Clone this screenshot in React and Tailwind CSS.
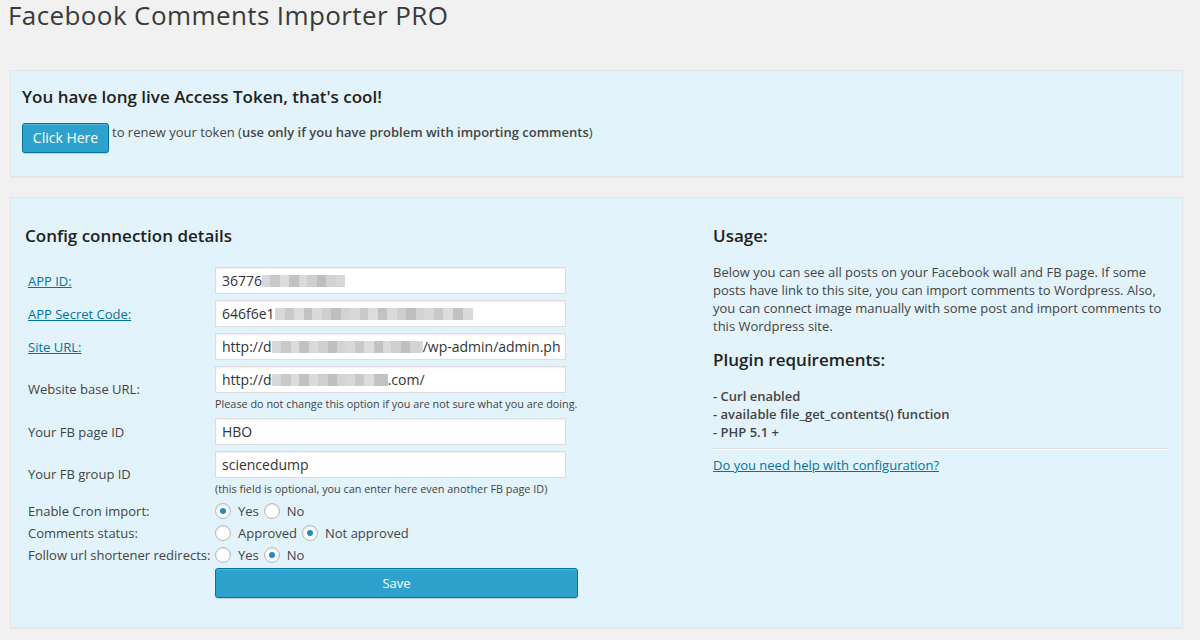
import React from 'react';

// pixelated redaction blocks, like the blurred parts of the screenshot
const Redact = ({ widths, shades }) => (
    <span className="inline-flex items-center align-middle h-[12px] -mt-[2px]">
        {widths.map((w, i) => (
            <span
                key={i}
                className="inline-block h-[12px]"
                style={{ width: w, backgroundColor: shades[i % shades.length] }}
            />
        ))}
    </span>
);

const greys = ['#d6d8d9', '#c9c9c9', '#dcdcdc', '#c2c2c2', '#d9dadb', '#cfcfcf', '#bdbfc0', '#d3d3d3'];

const Field = ({ children }) => (
    <div className="h-[27px] w-[351px] border border-[#ddd] bg-white shadow-[inset_0_1px_2px_rgba(0,0,0,0.07)] px-[6px] text-[14px] leading-[25px] text-[#333] overflow-hidden whitespace-nowrap">
        {children}
    </div>
);

const Radio = ({ checked }) => (
    <span className="w-[16px] h-[16px] rounded-full border border-[#b4b9be] bg-white shadow-[inset_0_1px_2px_rgba(0,0,0,0.1)] flex items-center justify-center shrink-0">
        {checked && <span className="w-[6px] h-[6px] rounded-full bg-[#1e8cbe]" />}
    </span>
);

const Row = ({ label, link, children }) => (
    <div className="flex items-center py-[3px]">
        <div className="w-[190px] pl-[3px] shrink-0">
            {link ? <a href="#" className="text-[#0074a2] underline">{label}</a> : label}
        </div>
        <div>{children}</div>
    </div>
);

const Help = ({ children }) => (
    <div className="mt-[3px] text-[10.85px] leading-[16px] text-[#444]">{children}</div>
);

const RadioRow = ({ label, options }) => (
    <div className="flex items-center h-[22px]">
        <div className="w-[190px] pl-[3px] shrink-0 whitespace-nowrap">{label}</div>
        <div className="flex items-center">
            {options.map((o, i) => (
                <React.Fragment key={o.text}>
                    <span className={i > 0 ? 'ml-[5px]' : ''}><Radio checked={o.checked} /></span>
                    <span className="ml-[7px]">{o.text}</span>
                </React.Fragment>
            ))}
        </div>
    </div>
);

const App = () => {
    return (
        <div className="min-h-[640px] w-[1200px] bg-[#f1f1f1] font-['Open_Sans',sans-serif] text-[13px] leading-[18px] text-[#444]">
            <h1 className="pl-[8px] text-[26px] leading-[30px] tracking-[0.4px] font-normal text-[#3a3a3a]">
                Facebook Comments Importer PRO
            </h1>

            {/* ── Token notice ── */}
            <div className="mt-[40px] ml-[10px] w-[1173px] border border-[#e5e5e5] bg-[#e2f3fb] shadow-[0_1px_1px_rgba(0,0,0,0.04)] pt-[15px] pb-[23px] px-[11px]">
                <h3 className="text-[17px] leading-[22px] font-semibold text-[#222]">
                    You have long live Access Token, that's cool!
                </h3>
                <div className="mt-[15px] flex items-start">
                    <button className="h-[30px] w-[87px] rounded-[3px] border border-[#0074a2] bg-[#2ea2cc] text-white text-[14px] shadow-[inset_0_1px_0_rgba(120,200,230,0.5),0_1px_0_rgba(0,0,0,0.15)]">
                        Click Here
                    </button>
                    <span className="ml-[3px]">
                        to renew your token (<b className="font-semibold">use only if you have problem with importing comments</b>)
                    </span>
                </div>
            </div>

            {/* ── Config + usage ── */}
            <div className="mt-[20px] ml-[10px] w-[1173px] border border-[#e5e5e5] bg-[#e2f3fb] shadow-[0_1px_1px_rgba(0,0,0,0.04)] pt-[27px] pb-[29px] flex">
                <div className="w-[702px] pl-[14px] shrink-0">
                    <h3 className="text-[17px] leading-[22px] font-semibold text-[#222]">Config connection details</h3>
                    <div className="mt-[17px]">
                        <Row label="APP ID:" link>
                            <Field>36776<Redact widths={[8, 10, 9, 10, 8, 10, 9, 10, 9]} shades={greys} /></Field>
                        </Row>
                        <Row label="APP Secret Code:" link>
                            <Field>646f6e1<Redact widths={[10, 9, 10, 8, 10, 9, 10, 9, 10, 8, 10, 9, 10, 9, 10, 8, 10, 9, 10, 10, 10]} shades={greys} /></Field>
                        </Row>
                        <Row label="Site URL:" link>
                            <Field>http://d<Redact widths={[9, 10, 8, 10, 9, 10, 9, 8, 10, 9, 10, 9, 8, 10, 9, 10, 3]} shades={greys} />/wp-admin/admin.ph</Field>
                        </Row>
                        <Row label="Website base URL:">
                            <Field>http://d<Redact widths={[9, 10, 8, 10, 9, 10, 9, 8, 10, 9, 10, 14]} shades={greys} />.com/</Field>
                            <Help>Please do not change this option if you are not sure what you are doing.</Help>
                        </Row>
                        <Row label="Your FB page ID">
                            <Field>HBO</Field>
                        </Row>
                        <Row label="Your FB group ID">
                            <Field>sciencedump</Field>
                            <Help>(this field is optional, you can enter here even another FB page ID)</Help>
                        </Row>
                        <RadioRow label="Enable Cron import:" options={[{ text: 'Yes', checked: true }, { text: 'No' }]} />
                        <RadioRow label="Comments status:" options={[{ text: 'Approved' }, { text: 'Not approved', checked: true }]} />
                        <RadioRow label="Follow url shortener redirects:" options={[{ text: 'Yes' }, { text: 'No', checked: true }]} />
                        <div className="pl-[190px] pt-[2px]">
                            <button className="h-[30px] w-[363px] rounded-[3px] border border-[#0074a2] bg-[#2ea2cc] text-white text-[13px] shadow-[inset_0_1px_0_rgba(120,200,230,0.5),0_1px_0_rgba(0,0,0,0.15)]">
                                Save
                            </button>
                        </div>
                    </div>
                </div>

                <div className="w-[455px] shrink-0">
                    <h3 className="text-[17px] leading-[22px] font-semibold text-[#222]">Usage:</h3>
                    <p className="mt-[16px] whitespace-nowrap">
                        Below you can see all posts on your Facebook wall and FB page. If some<br />
                        posts have link to this site, you can import comments to Wordpress. Also,<br />
                        you can connect image manually with some post and import comments to<br />
                        this Wordpress site.
                    </p>
                    <h3 className="mt-[14px] text-[17px] leading-[22px] font-semibold text-[#222]">Plugin requirements:</h3>
                    <ul className="mt-[16px] font-semibold">
                        <li>- Curl enabled</li>
                        <li>- available file_get_contents() function</li>
                        <li>- PHP 5.1 +</li>
                    </ul>
                    <hr className="mt-[7px] border-0 border-t border-t-[#ddd] border-b border-b-[#fafafa]" />
                    <a href="#" className="mt-[6px] inline-block text-[#0074a2] underline">Do you need help with configuration?</a>
                </div>
            </div>
        </div>
    );
};

export default App;
